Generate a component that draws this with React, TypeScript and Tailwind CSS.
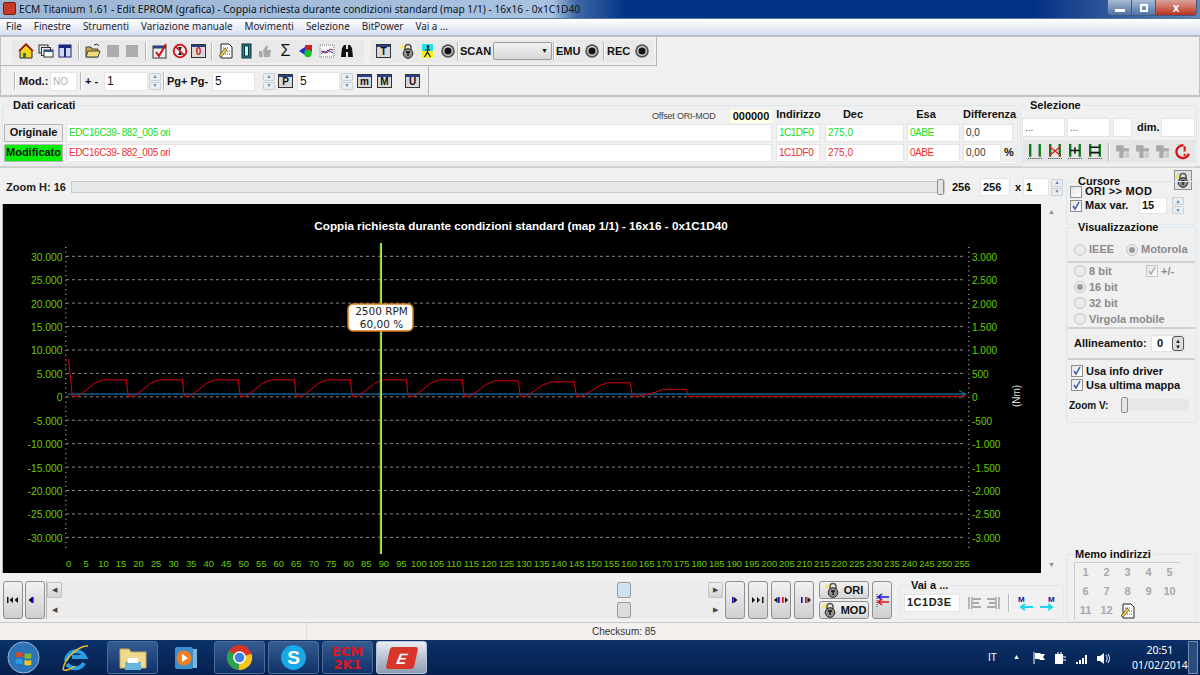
import type { ReactNode } from "react";

const yTicks = [30, 25, 20, 15, 10, 5, 0, -5, -10, -15, -20, -25, -30];
const xTicks = Array.from({ length: 52 }, (_, i) => i * 5);
const peaks = [16.5, 16.5, 16.5, 16.5, 16.5, 16.5, 16.5, 15.5, 14.5, 13.5, 7];

function curvePoints() {
  const pts: string[] = ["68.5,360", "72.3,397.3"];
  peaks.forEach((h, i) => {
    const s = 72.3 + 56 * i;
    const top = 397.3 - h;
    pts.push(`${s + 6},397.3`, `${s + 23},${top + 3}`, `${s + 31},${top}`, `${s + 54},${top}`, `${s + 56},397.3`);
  });
  pts.push("965,397.3");
  return pts.join(" ");
}

function fmt(n: number) {
  return n === 0 ? "0" : `${n}.000`;
}

function rightLabel(t: number) {
  if (t === 0) return "0";
  const a = Math.abs(t);
  const sign = t < 0 ? "-" : "";
  if (a === 5) return `${sign}500`;
  return a % 10 === 0 ? `${sign}${a / 10}.000` : `${sign}${Math.floor(a / 10)}.500`;
}

function Chart() {
  const minor = Array.from({ length: 65 }, (_, i) => 248 + i * 4.684);
  return (
    <svg viewBox="3 205 1038 369" className="block h-[369px] w-[1038px] bg-black">
      <text x="521" y="231" fill="#fff" fontSize="11.66" fontWeight="700" textAnchor="middle" fontFamily="Liberation Sans">
        Coppia richiesta durante condizioni standard (map 1/1) - 16x16 - 0x1C1D40
      </text>
      {minor.map((y) => (
        <g key={y} fill="#999">
          <rect x="65" y={y} width="1.5" height="1" />
          <rect x="968" y={y} width="1.5" height="1" />
        </g>
      ))}
      {yTicks.map((t, i) => {
        const y = 257.3 + i * 23.42;
        return (
          <g key={t}>
            <line x1="66" x2="966" y1={y} y2={y} stroke="#8a8a8a" strokeDasharray="3 3" />
            <text x="62.5" y={y + 4.5} fill="#66cc00" fontSize="10.3" textAnchor="end" fontFamily="Liberation Sans">{fmt(t)}</text>
            <text x="972" y={y + 4.5} fill="#66cc00" fontSize="10" fontFamily="Liberation Sans">{rightLabel(t)}</text>
          </g>
        );
      })}
      {xTicks.map((t, i) => (
        <text key={t} x={68.5 + i * 17.52} y="568" fill="#66cc00" fontSize="9.4" textAnchor="middle" fontFamily="Liberation Sans">{t}</text>
      ))}
      <line x1="68" x2="965" y1="395.2" y2="395.2" stroke="#0f4f78" strokeWidth="1.8" />
      <path d="M959 391.500l7 3.700-7 3.700" fill="none" stroke="#1c7ab0" />
      <polyline points={curvePoints()} fill="none" stroke="#d8000c" strokeWidth="1" />
      <line x1="381" x2="381" y1="244" y2="555" stroke="#a7e36a" strokeWidth="2" />
      <line x1="380.2" x2="380.2" y1="244" y2="555" stroke="#66cc00" strokeWidth="0.8" />
      <rect x="348" y="305" width="65" height="27" rx="5" fill="#fff" stroke="#d97a16" strokeWidth="1.5" />
      <text x="381.5" y="316" fill="#222" fontSize="10.5" textAnchor="middle" fontFamily="DejaVu Sans">2500 RPM</text>
      <text x="381.5" y="329" fill="#222" fontSize="10.5" textAnchor="middle" fontFamily="DejaVu Sans">60,00 %</text>
      <text transform="translate(1020 397) rotate(-90)" fill="#ddd" fontSize="10" textAnchor="middle" fontFamily="Liberation Sans">(Nm)</text>
    </svg>
  );
}

function Glyph({ children, w = 16 }: { children: ReactNode; w?: number }) {
  return (
    <svg viewBox="0 0 16 16" width={w} height={w} className="shrink-0">
      {children}
    </svg>
  );
}

const Home = () => (
  <Glyph>
    <path d="M2 8 8 2l6 6v7H2z" fill="#f6d21a" stroke="#222" />
    <path d="M1 8 8 1l7 7" fill="none" stroke="#b0140f" strokeWidth="1.6" />
    <rect x="5" y="10" width="3" height="5" fill="#0b7d7d" />
  </Glyph>
);
const Windows = () => (
  <Glyph>
    <rect x="1" y="2" width="9" height="8" fill="#dfe6ef" stroke="#333" />
    <rect x="3.5" y="4.5" width="9" height="8" fill="#eef" stroke="#333" />
    <rect x="6" y="7" width="9" height="7" fill="#fff" stroke="#333" />
    <rect x="6" y="7" width="9" height="2" fill="#33538f" />
  </Glyph>
);
const Panel = () => (
  <Glyph>
    <rect x="2" y="2" width="12" height="12" fill="#cfd8ff" stroke="#1a237e" />
    <rect x="2" y="2" width="12" height="3" fill="#1a237e" />
    <rect x="7" y="5" width="2" height="9" fill="#1a237e" />
  </Glyph>
);
const FolderOpen = () => (
  <Glyph>
    <path d="M1 4h5l1 2h6v8H1z" fill="#c9a93a" stroke="#444" />
    <path d="M3 8h12l-2 6H1z" fill="#f2da76" stroke="#444" />
    <path d="M9 2l3-1 2 2" fill="none" stroke="#333" />
  </Glyph>
);
const GrayBox = () => (
  <Glyph>
    <rect x="2" y="2" width="12" height="12" fill="#acacac" />
  </Glyph>
);
const WinText = ({ t, color = "#111" }: { t: string; color?: string }) => (
  <span className="flex h-[14px] w-[15px] shrink-0 flex-col border border-[#333] bg-[#d9d9d9]">
    <span className="h-[3px] bg-[#28408f]" />
    <span style={{ color }} className="text-center text-[10px] font-bold leading-[10px]">{t}</span>
  </span>
);
const CheckWin = () => (
  <Glyph>
    <rect x="1" y="3" width="13" height="12" fill="#eee" stroke="#333" />
    <rect x="1" y="3" width="13" height="2.5" fill="#28408f" />
    <path d="M4 9l3 4 7-12" fill="none" stroke="#d01010" strokeWidth="2" />
  </Glyph>
);
const NoSign = () => (
  <Glyph>
    <circle cx="8" cy="8" r="6.3" fill="#eee" stroke="#d01010" strokeWidth="1.8" />
    <path d="M6 4h4l-2 4 2 4H6l2-4z" fill="#222" />
    <path d="M3.5 3.5l9 9" stroke="#d01010" strokeWidth="1.6" />
  </Glyph>
);
const Note = () => (
  <Glyph>
    <path d="M3 1h8l3 3v11H3z" fill="#fff" stroke="#222" />
    <path d="M5 5h6M5 8h7M5 11h7" stroke="#555" strokeDasharray="1 1" />
    <path d="M1 13l6-8 2 2-6 7z" fill="#f2cf3b" stroke="#333" strokeWidth=".6" />
  </Glyph>
);
const TealBook = () => (
  <Glyph>
    <rect x="4" y="1" width="9" height="14" fill="#128a8a" stroke="#223" />
    <rect x="6.5" y="3" width="4" height="10" fill="#bfe" stroke="#134" />
  </Glyph>
);
const GrayHand = () => (
  <Glyph>
    <path d="M2 8h3l1 6H2zM6 7l4-5 1 1-1 4h4l-1 7H7z" fill="#a8a8a8" />
  </Glyph>
);
const Shapes = () => (
  <Glyph>
    <path d="M1 8l6-4v8z" fill="#1530c8" />
    <rect x="7" y="2" width="7" height="7" fill="#d02020" />
    <circle cx="10" cy="10.5" r="3.7" fill="#15c030" />
  </Glyph>
);
const ChartIcon = () => (
  <Glyph>
    <rect x="1" y="2" width="14" height="12" fill="#f4f4f4" stroke="#777" strokeDasharray="1 1" />
    <path d="M2 11l3-3 3 2 3-4 3 1" fill="none" stroke="#d02020" />
    <path d="M2 8l4 2 3-3 5 3" fill="none" stroke="#2030c8" />
  </Glyph>
);
const Binoculars = () => (
  <Glyph>
    <path d="M2 14l1-9 2-3h2v12zM9 14V2h2l2 3 1 9z" fill="#111" />
    <rect x="6" y="6" width="4" height="3" fill="#111" />
  </Glyph>
);
const Lock = ({ star = true }: { star?: boolean }) => (
  <Glyph>
    <path d="M5 7V4.5a3 3 0 0 1 6 0V7" fill="none" stroke="#555" strokeWidth="1.6" />
    <circle cx="8" cy="10.5" r="4.8" fill="#8c8c8c" stroke="#222" />
    <path d="M6 9h4M8 9v4" stroke="#111" strokeWidth="1.3" />
    {star && <path d="M2 1l1 2 2 1-2 1-1 2-1-2-1-1 2-1z" fill="#f8ee30" />}
  </Glyph>
);
const Runner = () => (
  <Glyph>
    <rect x="2" y="1" width="11" height="7" fill="#1fe0e8" />
    <rect x="2" y="8" width="11" height="7" fill="#f7f01e" />
    <circle cx="8" cy="3.5" r="1.3" fill="#111" />
    <path d="M8 5l-.5 4-3 5M7.5 9l3 5M5 7l5-.5" fill="none" stroke="#111" strokeWidth="1.2" />
  </Glyph>
);
const Rec = () => (
  <Glyph>
    <circle cx="8" cy="8" r="6.8" fill="#555" />
    <circle cx="8" cy="8" r="5" fill="#d0d0d0" />
    <circle cx="8" cy="8" r="3.6" fill="#111" />
  </Glyph>
);
const Sel = ({ kind }: { kind: number }) => (
  <Glyph w={17}>
    <path d="M3 1v12M12 1v12" stroke="#0b7a16" strokeWidth="2.2" />
    <path d="M1 14.5h14" stroke="#333" strokeDasharray="1 1" />
    {kind === 1 && <path d="M2 3l11 9M13 3 2 12" stroke="#e02020" strokeWidth="1.3" />}
    {kind === 2 && <path d="M3 7h9M7.500 4v6" stroke="#111" strokeWidth="1.4" />}
    {kind === 3 && <path d="M3 4h9M3 9h9" stroke="#111" strokeWidth="1.6" />}
  </Glyph>
);
const GrayCopy = () => (
  <Glyph w={17}>
    <path d="M2 2h7v3h5v3H9v6H5V8H2z" fill="#a9a9a9" />
    <path d="M10 9h4v5h-4z" fill="#c9c9c9" />
  </Glyph>
);
const PowerRed = () => (
  <Glyph w={17}>
    <path d="M9 2.300A6 6 0 1 0 14 10" fill="none" stroke="#e01010" strokeWidth="2.200" />
    <path d="M10 3v5M10 10v2" stroke="#e01010" strokeWidth="2" />
  </Glyph>
);
const Sep = ({ cls = "mx-[1px]" }: { cls?: string }) => (
  <span className={`h-[18px] w-[2px] shrink-0 border-x border-x-[#b5b5b5] border-r-white ${cls}`} />
);

const Spin = ({ h = 17 }: { h?: number }) => (
  <span style={{ height: h }} className="flex w-[12px] shrink-0 flex-col gap-px">
    <span className="flex flex-1 items-center justify-center rounded-[1px] border border-[#ccd0d6] bg-[#e8edf3] text-[5px] leading-none text-[#5a7fa8]">▲</span>
    <span className="flex flex-1 items-center justify-center rounded-[1px] border border-[#ccd0d6] bg-[#e8edf3] text-[5px] leading-none text-[#5a7fa8]">▼</span>
  </span>
);

function Field({ v, w, cls = "", h = 18 }: { v?: string; w: number; cls?: string; h?: number }) {
  return (
    <span style={{ width: w, height: h }} className={`flex shrink-0 items-center overflow-hidden whitespace-nowrap border border-[#e4e4e4] bg-white px-[2px] ${cls}`}>
      {v}
    </span>
  );
}

function Group({ title, left, cls, children }: { title: string; left: number; cls: string; children: ReactNode }) {
  return (
    <div className={`relative shrink-0 rounded-[3px] border border-[#dce7ef] ${cls}`}>
      <span style={{ left }} className="absolute -top-[6px] whitespace-nowrap bg-[#f0f0f0] px-[2px] text-[11px] font-bold leading-[10px] text-[#111]">{title}</span>
      {children}
    </div>
  );
}

const Check = ({ on, dim }: { on?: boolean; dim?: boolean }) => (
  <span className={`flex h-[12px] w-[12px] shrink-0 items-center justify-center border ${dim ? "border-[#c4c4c4]" : "border-[#8e8f8f]"} bg-gradient-to-br from-[#e4e4e4] to-white`}>
    {on && (
      <svg viewBox="0 0 10 10" width="10" height="10">
        <path d="M2 5l2 3 4-7" fill="none" stroke={dim ? "#aaa" : "#3a57b0"} strokeWidth="1.5" />
      </svg>
    )}
  </span>
);
const Radio = ({ on }: { on?: boolean }) => (
  <span className="flex h-[12px] w-[12px] shrink-0 items-center justify-center rounded-full border border-[#c4c4c4] bg-[#ececec]">
    {on && <span className="h-[6px] w-[6px] rounded-full bg-[#9a9a9a]" />}
  </span>
);

function NavBtn({ bars, w = 20, h = 38 }: { bars: ReactNode; w?: number; h?: number }) {
  return (
    <span style={{ width: w, height: h }} className="flex shrink-0 items-center justify-center rounded-[3px] border border-[#8e8f8f] bg-gradient-to-b from-[#f2f2f2] to-[#cfcfcf]">
      {bars}
    </span>
  );
}
const Nav = ({ d, blue, red }: { d: string; blue?: boolean; red?: boolean }) => (
  <svg viewBox="0 0 14 8" width="14" height="8">
    <path d={d} fill="#111" />
    {blue && <rect x="4" y="1" width="1.700" height="6" fill="#1414e0" />}
    {red && <rect x="8" y="1" width="1.700" height="6" fill="#e01414" />}
  </svg>
);

function Scroll({ thumbLeft, thumbCls, boxed }: { thumbLeft: number; thumbCls: string; boxed?: boolean }) {
  const box = boxed ? "border border-[#c4c4c4] bg-gradient-to-b from-[#efefef] to-[#d4d4d4]" : "";
  return (
    <div className="relative flex h-[18px] items-center justify-between bg-[#ececec] text-[7px] text-[#444]">
      <span className={`flex h-[16px] w-[15px] items-center justify-center rounded-[1px] ${box}`}>◀</span>
      <span style={{ left: thumbLeft }} className={`absolute top-[1px] h-[16px] w-[14px] rounded-[2px] border border-[#9a9a9a] ${thumbCls}`} />
      <span className={`flex h-[16px] w-[15px] items-center justify-center rounded-[1px] ${box}`}>▶</span>
    </div>
  );
}

function TaskBtn({ children, active }: { children: ReactNode; active?: boolean }) {
  return (
    <span className={`flex h-[33px] w-[51px] shrink-0 items-center justify-center rounded-[3px] border ${active ? "border-[#b8c4d4] bg-gradient-to-b from-[#e8edf3] to-[#8d9db2]" : "border-[#4b6c98] bg-gradient-to-b from-[#355c91] to-[#0f3269]"}`}>
      {children}
    </span>
  );
}

const ListIcon = ({ flip }: { flip?: boolean }) => (
  <svg viewBox="0 0 16 16" width="16" height="16" className={flip ? "-scale-x-100" : ""}>
    <path d="M3 2v12M6 2v12" stroke="#a9a9a9" strokeWidth="1.6" />
    <path d="M7 4h8M7 8h6M7 12h8" stroke="#a9a9a9" strokeWidth="1.8" />
  </svg>
);
const MemoArrow = ({ right }: { right?: boolean }) => (
  <svg viewBox="0 0 18 16" width="18" height="16">
    <text x={right ? 10 : 1} y="7" fontSize="8" fontWeight="700" fill="#14148c" fontFamily="Liberation Sans">M</text>
    <path d={right ? "M2 12h12M10 9l4 3-4 3" : "M16 12H4M8 9l-4 3 4 3"} fill="none" stroke="#19d8ee" strokeWidth="2" />
  </svg>
);

export default function App() {
  return (
    <div className="flex h-[675px] w-[1200px] flex-col overflow-hidden bg-[#f0f0f0] font-['Liberation_Sans',sans-serif] text-[11px] text-[#111]">
      {/* title bar */}
      <div className="flex h-[19px] shrink-0 items-start border-b border-[#5377a6] bg-[linear-gradient(90deg,#9db6d4_0%,#a9c2df_46%,#3f6aa6_48%,#033386_52%,#023082_86%,#6487b6_100%)] pl-[3px]">
        <span className="mt-[2px] h-[13px] w-[13px] rounded-[2px] border border-[#7a1a10] bg-[#c83a28]" />
        <span className="ml-[3px] mt-[1px] whitespace-nowrap font-['Noto_Sans',sans-serif] text-[10.2px] leading-[16px] text-[#0b1420]">
          ECM Titanium 1.61 - Edit EPROM (grafica) - Coppia richiesta durante condizioni standard (map 1/1) - 16x16 - 0x1C1D40
        </span>
        <span className="ml-auto mr-[3px] flex h-[16px] w-[90px] overflow-hidden rounded-b-[4px] border border-t-0 border-[#3e5b83]">
          <span className="flex w-[24px] items-end justify-center border-r border-[#3e5b83] bg-gradient-to-b from-[#a9bcd4] to-[#4e74a3] pb-[3px]"><span className="h-[3px] w-[10px] bg-white" /></span>
          <span className="flex w-[24px] items-center justify-center border-r border-[#3e5b83] bg-gradient-to-b from-[#a9bcd4] to-[#4e74a3]"><span className="h-[8px] w-[8px] border-2 border-white" /></span>
          <span className="flex flex-1 items-center justify-center bg-gradient-to-b from-[#d9a197] to-[#b92c17] text-[12px] font-bold leading-none text-white">x</span>
        </span>
      </div>
      {/* menu */}
      <div className="flex h-[17px] shrink-0 items-center gap-[12px] border-b border-[#b9b9b9] bg-gradient-to-b from-white to-[#d6def0] px-[6px] font-['Noto_Sans',sans-serif] text-[9.9px] leading-none text-[#1c2430]">
        {["File", "Finestre", "Strumenti", "Variazione manuale", "Movimenti", "Selezione", "BitPower", "Vai a ..."].map((m) => (
          <span key={m}>{m}</span>
        ))}
      </div>
      {/* toolbars */}
      <div className="flex h-[61px] shrink-0 flex-col border border-[#c2c2c2] border-b-2">
        <div className="flex h-[29px] w-[656px] shrink-0 items-center border-b border-r border-[#b5b5b5] pl-[11px]">
          <div className="flex h-[23px] w-[352px] shrink-0 items-center gap-[3.5px] bg-[#e9e9e9] pl-[6px]">
            <Home /><Windows /><Panel /><Sep cls="mx-[1.5px]" /><FolderOpen /><GrayBox /><GrayBox /><Sep cls="mx-[1.5px]" /><CheckWin /><NoSign /><WinText t="0" color="#d01010" /><Sep cls="mx-[1.5px]" />
            <Note /><TealBook /><GrayHand /><span className="ml-[1px] w-[16px] text-center text-[16px] leading-none">Σ</span><span className="ml-[1px]"><Shapes /></span><span className="ml-[1px]"><ChartIcon /></span><span className="ml-[1px]"><Binoculars /></span>
          </div>
          <div className="ml-[6px] flex h-[23px] w-[284px] shrink-0 items-center whitespace-nowrap bg-[#e9e9e9] pl-[6px] text-[11px] font-bold">
            <WinText t="T" /><span className="ml-[9px]"><Lock /></span><span className="ml-[4px]"><Runner /></span><span className="ml-[4px]"><Rec /></span>
            <Sep />
            <span className="w-[31px]">SCAN</span>
            <span className="ml-[2px] flex h-[18px] w-[59px] items-center justify-end rounded-[2px] border border-[#9a9a9a] bg-gradient-to-b from-[#f2f2f2] to-[#d8d8d8] pr-[3px] text-[7px]">▼</span>
            <Sep />
            <span className="w-[25px]">EMU</span><span className="ml-[3px]"><Rec /></span>
            <Sep cls="ml-[3px] mr-[2px]" />
            <span className="w-[24px]">REC</span><span className="ml-[3px]"><Rec /></span>
          </div>
        </div>
        <div className="flex h-[30px] w-[428px] shrink-0 items-center whitespace-nowrap border-r border-[#b5b5b5] pl-[13px] text-[11px] font-bold">
          <Sep cls="mr-[3px]" /><span className="w-[28px]">Mod.:</span>
          <Field v="NO" w={27} h={19} cls="ml-[3px] font-normal text-[#b0b0b0] text-[10px]" />
          <Sep cls="mx-[3px]" /><span className="w-[18px]">+ -</span>
          <Field v="1" w={44} h={19} cls="ml-[1px] font-normal text-[12px]" />
          <span className="ml-[1px]"><Spin /></span>
          <Sep cls="mx-[2px]" /><span className="w-[44px]">Pg+ Pg-</span>
          <Field v="5" w={43} h={19} cls="ml-[1px] font-normal text-[12px]" />
          <span className="ml-[8px]"><Spin /></span>
          <span className="ml-[3px]"><WinText t="P" /></span>
          <Field v="5" w={43} h={19} cls="ml-[4px] font-normal text-[12px]" />
          <span className="ml-[1px]"><Spin /></span>
          <span className="ml-[4px]"><WinText t="m" /></span>
          <span className="ml-[5px]"><WinText t="M" /></span>
          <span className="ml-[13px]"><WinText t="U" /></span>
        </div>
      </div>
      {/* loaded data + selection */}
      <div className="flex h-[71px] shrink-0 border-b-2 border-[#d0d0d0] pt-[8px]">
        <Group title="Dati caricati" left={8} cls="ml-[2px] flex h-[60px] w-[1016px] flex-col px-[1px] pb-[3px]">
          <div className="flex h-[18px] items-end whitespace-nowrap pb-[1px]">
            <span className="ml-[648px] w-[66px] text-[9px] leading-[13px] tracking-[-.2px] text-[#444]">Offset ORI-MOD</span>
            <span className="ml-[12px] w-[42px] bg-[#ffffe8] text-center font-bold leading-[13px]">000000</span>
            <span className="ml-[4px] w-[45px] text-center font-bold">Indirizzo</span>
            <span className="ml-[5px] w-[54px] text-center font-bold">Dec</span>
            <span className="ml-[27px] w-[38px] text-center font-bold">Esa</span>
            <span className="ml-[18px] w-[52px] text-center font-bold">Differenza</span>
          </div>
          <div className="flex h-[18px] items-center">
            <span className="flex h-[18px] w-[59px] items-center justify-center rounded-[1px] border border-[#b5b5b5] bg-[#ededed] font-bold">Originale</span>
            <Field v="EDC16C39- 882_005 ori" w={706} cls="ml-[3px] text-[#22dd22] text-[10px] tracking-[-.4px]" />
            <Field v="1C1DF0" w={44} cls="ml-[4px] text-[#22dd22] text-[10px] tracking-[-.5px]" />
            <Field v="275,0" w={79} cls="ml-[5px] text-[#22dd22] text-[10px]" />
            <Field v="0ABE" w={53} cls="ml-[3px] text-[#22dd22] text-[10px] tracking-[-.5px]" />
            <Field v="0,0" w={50} cls="ml-[3px] text-[#333] text-[10px]" />
          </div>
          <div className="mt-[2px] flex h-[18px] items-center">
            <span className="flex h-[18px] w-[59px] items-center justify-center rounded-[1px] border border-[#b5b5b5] bg-[#06ee06] font-bold">Modificato</span>
            <Field v="EDC16C39- 882_005 ori" w={706} cls="ml-[3px] text-[#f03030] text-[10px] tracking-[-.4px]" />
            <Field v="1C1DF0" w={44} cls="ml-[4px] text-[#f03030] text-[10px] tracking-[-.5px]" />
            <Field v="275,0" w={79} cls="ml-[5px] text-[#f03030] text-[10px]" />
            <Field v="0ABE" w={53} cls="ml-[3px] text-[#f03030] text-[10px] tracking-[-.5px]" />
            <Field v="0,00" w={38} cls="ml-[3px] text-[#333] text-[10px]" />
            <span className="ml-[3px] font-bold">%</span>
          </div>
        </Group>
        <Group title="Selezione" left={7} cls="ml-[2px] flex h-[62px] w-[177px] flex-col px-[1px]">
          <div className="mt-[12px] flex h-[19px] items-center">
            <Field v="..." w={43} h={19} cls="text-[10px] text-[#555]" />
            <Field v="..." w={43} h={19} cls="ml-[2px] text-[10px] text-[#555]" />
            <Field w={19} h={19} cls="ml-[3px]" />
            <span className="ml-[5px] w-[24px] font-bold">dim.</span>
            <Field w={34} h={19} cls="ml-[1px]" />
          </div>
          <div className="mt-[3px] flex h-[23px] w-[173px] items-center gap-[3px] bg-[#e6e6e6] pl-[5px]">
            <Sel kind={0} /><Sel kind={1} /><Sel kind={2} /><Sel kind={3} /><Sep /><GrayCopy /><GrayCopy /><GrayCopy /><PowerRed />
          </div>
        </Group>
      </div>
      {/* main area */}
      <div className="flex h-[454px] shrink-0">
        <div className="flex w-[1064px] shrink-0 flex-col">
          <div className="flex h-[36px] shrink-0 items-center pl-[6px] pt-[2px] font-bold">
            <span className="w-[65px] text-[#222]">Zoom H: 16</span>
            <span className="relative h-[12px] w-[874px] border border-[#c8c8c8] bg-[#e6e8e8]">
              <span className="absolute -top-[3px] left-[865px] h-[16px] w-[7px] rounded-[2px] border border-[#8e8f8f] bg-[#e4e4e4]" />
            </span>
            <span className="ml-[7px] w-[20px]">256</span>
            <Field v="256" w={30} cls="ml-[8px]" />
            <span className="ml-[5px] w-[7px]">x</span>
            <Field v="1" w={26} cls="ml-[1px]" />
            <span className="ml-[2px]"><Spin /></span>
          </div>
          <div className="flex h-[369px] shrink-0 pl-[2px]">
            <div className="border-l border-[#b0b0b0]"><Chart /></div>
            <div className="ml-[3px] flex w-[15px] flex-col items-center justify-between py-[3px] text-[7px] text-[#888]">
              <span>▲</span><span>▼</span>
            </div>
          </div>
          <div className="mt-[8px] flex h-[38px] shrink-0 items-center pl-[3px]">
            <NavBtn bars={<Nav d="M1 1h1.500v6H1zM7 1v6L3.500 4zM12 1v6L8.500 4z" />} />
            <span className="ml-[2px]"><NavBtn bars={<Nav blue d="M4 1v6L0.500 4z" />} /></span>
            <div className="ml-[1px] flex w-[678px] flex-col gap-[2px] border-l border-[#b5b5b5]">
              <Scroll thumbLeft={570} thumbCls="bg-[#cfe0ee]" boxed />
              <Scroll thumbLeft={570} thumbCls="bg-[#dcdcdc]" />
            </div>
            <span className="ml-[2px]"><NavBtn bars={<Nav blue d="M6 1v6l3.500-3z" />} /></span>
            <span className="ml-[3px]"><NavBtn bars={<Nav d="M1 1v6l3-3zM6 1v6l3-3zM11 1h1.500v6H11z" />} /></span>
            <span className="ml-[3px]"><NavBtn bars={<Nav blue red d="M3.500 1v6L0 4zM11 1v6l3-3z" />} /></span>
            <span className="ml-[3px]"><NavBtn bars={<Nav blue red d="M10.500 1v6l3.500-3z" />} /></span>
            <div className="ml-[5px] flex w-[50px] shrink-0 flex-col gap-[2px]">
              {["ORI", "MOD"].map((t) => (
                <span key={t} className="flex h-[18px] items-center justify-center gap-[3px] rounded-[3px] border border-[#8e8f8f] bg-gradient-to-b from-[#f2f2f2] to-[#d6d6d6] font-bold">
                  <Lock />
                  {t}
                </span>
              ))}
            </div>
            <span className="ml-[3px]">
              <NavBtn bars={
                <svg viewBox="0 0 16 16" width="16" height="16">
                  <path d="M3 2v13" stroke="#333" strokeDasharray="1 1" />
                  <path d="M15 5H4M8 2 4 5l4 3" fill="none" stroke="#1414e0" strokeWidth="1.500" />
                  <path d="M15 10H4M8 7l-4 3 4 3" fill="none" stroke="#e01414" strokeWidth="1.500" />
                </svg>} />
            </span>
            <Group title="Vai a ..." left={9} cls="ml-[7px] mt-[5px] flex h-[35px] w-[165px] items-center pl-[4px]">
              <Field v="1C1D3E" w={56} h={18} cls="font-bold tracking-[.5px] text-[#222]" />
              <span className="ml-[6px] flex items-center gap-[4px]">
                <ListIcon /><ListIcon flip />
                <Sep cls="mx-[2px] h-[16px] border-x-[#999]" />
                <span className="ml-[1px] flex gap-[3px]"><MemoArrow /><MemoArrow right /></span>
              </span>
            </Group>
          </div>
        </div>
        <div className="relative flex w-[136px] flex-col pl-[2px]">
          <span className="absolute left-[110px] top-[2px] flex h-[20px] w-[18px] items-center justify-center border border-[#8e8f8f] bg-[#e0e0e0]"><Lock /></span>
          <Group title="Cursore" left={9} cls="mt-[13px] h-[44px] w-[131px] px-[3px] pt-[3px] font-bold">
            <div className="flex h-[13px] items-center gap-[3px]"><Check /><span className="leading-[11px] tracking-[.3px]">ORI &gt;&gt; MOD</span></div>
            <div className="flex h-[15px] items-center gap-[3px]">
              <Check on /><span className="w-[51px]">Max var.</span>
              <Field v="15" w={28} h={17} />
              <span className="ml-[2px]"><Spin h={17} /></span>
            </div>
          </Group>
          <Group title="Visualizzazione" left={9} cls="mt-[2px] h-[196px] w-[131px] px-[1px] pt-[10px] font-bold text-[#8a8a8a]">
            <div className="flex h-[25px] items-center border-b-2 border-[#d0d0d0] pl-[6px]">
              <Radio /><span className="ml-[3px]">IEEE</span>
              <span className="ml-[12px]"><Radio on /></span><span className="ml-[3px]">Motorola</span>
            </div>
            <div className="flex h-[66px] flex-col justify-center border-b-2 border-[#d0d0d0] pl-[6px] text-[11px]">
              <div className="flex h-[16px] items-center"><Radio /><span className="ml-[3px] w-[57px]">8 bit</span><Check on dim /><span className="ml-[3px]">+/-</span></div>
              <div className="flex h-[16px] items-center"><Radio on /><span className="ml-[3px]">16 bit</span></div>
              <div className="flex h-[16px] items-center"><Radio /><span className="ml-[3px]">32 bit</span></div>
              <div className="flex h-[16px] items-center"><Radio /><span className="ml-[3px]">Virgola mobile</span></div>
            </div>
            <div className="flex h-[31px] items-center border-b-2 border-[#d0d0d0] pl-[6px] text-[#111]">
              <span className="w-[77px] whitespace-nowrap">Allineamento:</span>
              <Field v="0" w={34} h={17} cls="pl-[5px]" />
              <span className="-ml-[13px] flex h-[15px] w-[12px] flex-col items-center justify-center rounded-[3px] border border-[#555] bg-[#ddd] text-[6px] leading-[6px] text-[#222]">
                <span>▲</span><span>▼</span>
              </span>
            </div>
            <div className="mt-[4px] flex flex-col pl-[3px] text-[#111]">
              <div className="flex h-[14px] items-center gap-[3px]"><Check on /><span>Usa info driver</span></div>
              <div className="flex h-[14px] items-center gap-[3px]"><Check on /><span>Usa ultima mappa</span></div>
            </div>
            <div className="mt-[6px] flex h-[14px] items-center pl-[1px] text-[#111]">
              <span className="w-[52px] text-[10px]">Zoom V:</span>
              <span className="relative h-[12px] w-[68px] bg-[#e6e8e8]">
                <span className="absolute -top-[2px] left-0 h-[16px] w-[7px] rounded-[2px] border border-[#8e8f8f] bg-[#e4e4e4]" />
              </span>
            </div>
          </Group>
          <Group title="Memo indirizzi" left={6} cls="mt-[131px] h-[68px] w-[131px] pl-[7px] pt-[7px] font-bold text-[#a8a8a8]">
            <div className="grid w-[106px] grid-cols-5 border-l border-t border-[#cccccc] text-center text-[11px] leading-[19px]">
              {["1", "2", "3", "4", "5", "6", "7", "8", "9", "10", "11", "12"].map((n) => (
                <span key={n}>{n}</span>
              ))}
              <span className="flex items-center justify-center"><Note /></span>
            </div>
          </Group>
        </div>
      </div>
      {/* status */}
      <div className="flex h-[18px] shrink-0 items-center border-t border-[#c8c8c8] bg-[#f3f0ee] text-[10px] text-[#333]">
        <span className="h-full w-[307px] border-r border-[#dcdcdc]" />
        <span className="ml-[285px]">Checksum: 85</span>
      </div>
      {/* taskbar */}
      <div className="flex h-[35px] shrink-0 items-center bg-gradient-to-b from-[#0b3168] to-[#062050] pl-[7px] text-white">
        <svg viewBox="0 0 34 34" width="33" height="33" className="shrink-0">
          <circle cx="17" cy="17" r="16" fill="#2c74b8" stroke="#9db7d4" />
          <path d="M9 12c3-1 5-1 7 0v5c-2-1-4-1-7 0z" fill="#e0482a" />
          <path d="M18 12.500c2 1 5 1 7 0v5c-2 1-5 1-7 0z" fill="#7fbb2a" />
          <path d="M9 19c3-1 5-1 7 0v5c-2-1-4-1-7 0z" fill="#2f9be0" />
          <path d="M18 19.500c2 1 5 1 7 0v5c-2 1-5 1-7 0z" fill="#f7c520" />
        </svg>
        <svg viewBox="0 0 30 30" width="30" height="30" className="ml-[20px] shrink-0">
          <path d="M6 18a10 10 0 0 1 19-4H12M24 20a10 10 0 0 1-17 1" fill="none" stroke="#2b9ce4" strokeWidth="4" />
          <path d="M28 3C20 2 5 14 3 26c1 3 8 0 12-3" fill="none" stroke="#eebf25" strokeWidth="1.5" />
        </svg>
        <span className="ml-[17px]">
          <TaskBtn>
            <svg viewBox="0 0 30 26" width="30" height="26">
              <path d="M2 4h9l2 3h15v16H2z" fill="#f0d98a" stroke="#c7a85a" />
              <rect x="7" y="17" width="16" height="8" fill="#66b6e0" />
              <rect x="10" y="13" width="10" height="5" fill="#fff" />
            </svg>
          </TaskBtn>
        </span>
        <svg viewBox="0 0 26 26" width="26" height="26" className="ml-[15px] shrink-0">
          <rect x="7" y="4" width="17" height="19" fill="#7fb2d8" />
          <rect x="2" y="2" width="18" height="22" rx="2" fill="#3d8ecb" />
          <circle cx="11" cy="13" r="7.500" fill="#f08020" />
          <path d="M9 9l6 4-6 4z" fill="#fff" />
        </svg>
        <span className="ml-[15px]">
          <TaskBtn>
            <svg viewBox="0 0 28 28" width="27" height="27">
              <circle cx="14" cy="14" r="13" fill="#d9342a" />
              <path d="M14 14 26.500 10A13 13 0 0 1 13 27z" fill="#f5c518" />
              <path d="M14 14 13 27A13 13 0 0 1 3 7z" fill="#2ca24c" />
              <circle cx="14" cy="14" r="6.500" fill="#fff" />
              <circle cx="14" cy="14" r="5" fill="#3f7fe0" />
            </svg>
          </TaskBtn>
        </span>
        <span className="ml-[3px]">
          <TaskBtn>
            <span className="flex h-[25px] w-[25px] items-center justify-center rounded-full bg-[#17a8e6] text-[19px] font-bold leading-none text-white">S</span>
          </TaskBtn>
        </span>
        <span className="ml-[3px]">
          <TaskBtn>
            <span className="text-center font-['DejaVu_Sans',sans-serif] text-[13px] font-bold leading-[13px] text-[#e0141c]">ECM<br />2K1</span>
          </TaskBtn>
        </span>
        <span className="ml-[3px]">
          <TaskBtn active>
            <span className="flex h-[22px] w-[28px] skew-x-[-12deg] items-center justify-center rounded-[3px] bg-[#d8342a] text-[15px] font-bold italic leading-none text-white">E</span>
          </TaskBtn>
        </span>
        <span className="ml-[561px] w-[10px] text-[10px]">IT</span>
        <span className="ml-[15px] text-[7px]">▲</span>
        <svg viewBox="0 0 14 14" width="14" height="14" className="ml-[12px]"><path d="M2 1v12" stroke="#fff" /><path d="M3 2h5l1 1h4l-2 3 2 3H8L7 8H3z" fill="#fff" /></svg>
        <svg viewBox="0 0 14 14" width="14" height="14" className="ml-[7px]"><rect x="2" y="3" width="8" height="10" fill="#fff" /><path d="M10 6h3M10 9h3M5 3V1M8 3V1" stroke="#fff" /></svg>
        <svg viewBox="0 0 14 12" width="14" height="12" className="ml-[8px]"><path d="M1 10h2v2H1zM4 8h2v4H4zM7 6h2v6H7zM10 3h2v9h-2z" fill="#fff" /></svg>
        <svg viewBox="0 0 14 14" width="14" height="14" className="ml-[7px]"><path d="M1 5h3l4-3v11L4 10H1z" fill="#fff" /><path d="M10 4c1.500 2 1.500 5 0 7M12 3c2 3 2 6 0 9" fill="none" stroke="#fff" /></svg>
        <span className="ml-[22px] w-[56px] whitespace-nowrap text-center font-['Noto_Sans',sans-serif] text-[10.5px] leading-[15px]">20:51<br />01/02/2014</span>
        <span className="h-[33px] w-[10px] border border-[#6f8bad] bg-[#2a4c7e]" />
      </div>
    </div>
  );
}
